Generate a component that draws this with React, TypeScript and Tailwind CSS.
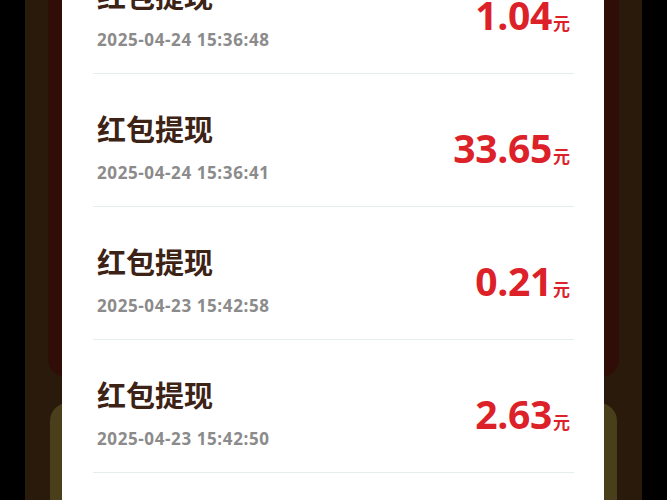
import React from 'react';

interface Record {
  title: string;
  time: string;
  amount: string;
}

const records: Record[] = [
  { title: '红包提现', time: '2025-04-24 15:36:48', amount: '1.04' },
  { title: '红包提现', time: '2025-04-24 15:36:41', amount: '33.65' },
  { title: '红包提现', time: '2025-04-23 15:42:58', amount: '0.21' },
  { title: '红包提现', time: '2025-04-23 15:42:50', amount: '2.63' },
];

const Row: React.FC<{ item: Record }> = ({ item }) => (
  <div className="h-[133px] border-b border-[#e3eeee] flex items-start justify-between pl-[4px] pr-[4px]">
    <div className="flex flex-col pt-[36px]">
      <span
        className="text-[29px] leading-[36px] font-bold text-[#3d2316]"
        style={{ fontFamily: '"Noto Sans CJK SC", sans-serif' }}
      >
        {item.title}
      </span>
      <span
        className="mt-[17px] text-[17px] leading-[20px] font-bold tracking-[0.6px] text-[#8b8b8b]"
        style={{ fontFamily: '"Open Sans", "Noto Sans CJK SC", sans-serif' }}
      >
        {item.time}
      </span>
    </div>
    <div className="pt-[52px] flex items-baseline text-[#dc2228]">
      <span
        className="text-[39px] leading-[44px] font-bold tracking-[-0.3px]"
        style={{ fontFamily: '"Open Sans", sans-serif' }}
      >
        {item.amount}
      </span>
      <span
        className="text-[17px] font-bold ml-[1px]"
        style={{ fontFamily: '"Noto Sans CJK SC", sans-serif' }}
      >
        元
      </span>
    </div>
  </div>
);

export default function App() {
  return (
    <div className="w-[667px] h-[500px] bg-black overflow-hidden">
      <div className="ml-[25px] w-[617px] h-full bg-[#2a1a0c] grid">
        {/* background panels */}
        <div className="[grid-area:1/1] flex flex-col">
          <div className="mx-[23px] h-[377px] bg-[#300d07] rounded-b-[18px]" />
          <div className="mx-[25px] mt-[26px] flex-1 bg-[#4a3f1b] rounded-t-[18px]" />
        </div>
        {/* card */}
        <div className="[grid-area:1/1] ml-[37px] mr-[38px] bg-white overflow-hidden">
          <div className="-mt-[59px] pl-[31px] pr-[30px]">
            {records.map((r, i) => (
              <Row key={i} item={r} />
            ))}
          </div>
        </div>
      </div>
    </div>
  );
}
